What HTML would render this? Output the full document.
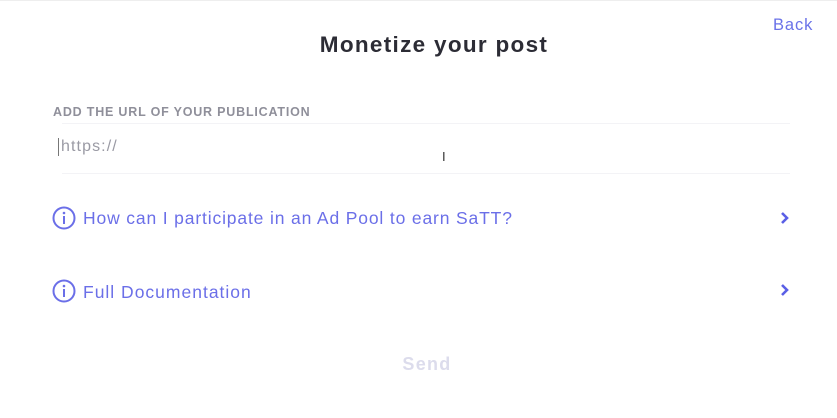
<!DOCTYPE html>
<html><head><style>
html,body{margin:0;width:837px;height:418px;background:#fff;overflow:hidden;font-family:"Liberation Sans",sans-serif;position:relative}
.a{position:absolute;white-space:nowrap}
.t{left:0;width:868px;text-align:center;top:32px;font-size:22.5px;font-weight:bold;color:#2c2c35;letter-spacing:1.3px}
.back{left:773px;top:16px;font-size:16.5px;color:#6a72e8;letter-spacing:0.9px}
.lbl{left:53px;top:105px;font-size:12.5px;font-weight:bold;color:#8f8f9a;letter-spacing:0.8px}
.line{position:absolute;left:62px;width:728px;height:1px;background:#f3f3f6}
.ph{left:58px;top:138px;font-size:16px;color:#9a9aa4;border-left:1px solid #777;padding-left:2px;letter-spacing:1.1px}
.lk{left:83px;font-size:17.5px;color:#6b6fe8}
.ic{position:absolute;left:52px}
.ch{position:absolute;left:779px}
.send{left:0;width:854px;text-align:center;top:354px;font-size:18px;font-weight:bold;color:#dcdcec;letter-spacing:1.3px}
</style></head><body>
<div style="position:absolute;left:0;top:0;width:837px;height:1px;background:#eee"></div>
<div class="a t">Monetize your post</div>
<div class="a back">Back</div>
<div class="a lbl">ADD THE URL OF YOUR PUBLICATION</div>
<div class="line" style="top:123px"></div>
<div class="a ph">https://</div>
<div class="a" style="left:442px;top:149px;font-size:13px;color:#333">I</div>
<div class="line" style="top:173px"></div>
<svg class="ic" style="top:206px" width="24" height="24" viewBox="0 0 24 24"><circle cx="12" cy="12" r="10.5" fill="none" stroke="#6b6fe8" stroke-width="2"/><circle cx="12" cy="7" r="1.3" fill="#6b6fe8"/><rect x="11" y="10" width="2" height="8" fill="#6b6fe8"/></svg>
<div class="a lk" style="top:208px;letter-spacing:0.85px">How can I participate in an Ad Pool to earn SaTT?</div>
<svg class="ch" style="top:210px" width="12" height="16" viewBox="0 0 12 16"><path d="M3 3l5 5-5 5" fill="none" stroke="#5a5fe6" stroke-width="2.6"/></svg>
<svg class="ic" style="top:279px" width="24" height="24" viewBox="0 0 24 24"><circle cx="12" cy="12" r="10.5" fill="none" stroke="#6b6fe8" stroke-width="2"/><circle cx="12" cy="7" r="1.3" fill="#6b6fe8"/><rect x="11" y="10" width="2" height="8" fill="#6b6fe8"/></svg>
<div class="a lk" style="top:282px;letter-spacing:1px">Full Documentation</div>
<svg class="ch" style="top:282px" width="12" height="16" viewBox="0 0 12 16"><path d="M3 3l5 5-5 5" fill="none" stroke="#5a5fe6" stroke-width="2.6"/></svg>
<div class="a send">Send</div>
</body></html>
